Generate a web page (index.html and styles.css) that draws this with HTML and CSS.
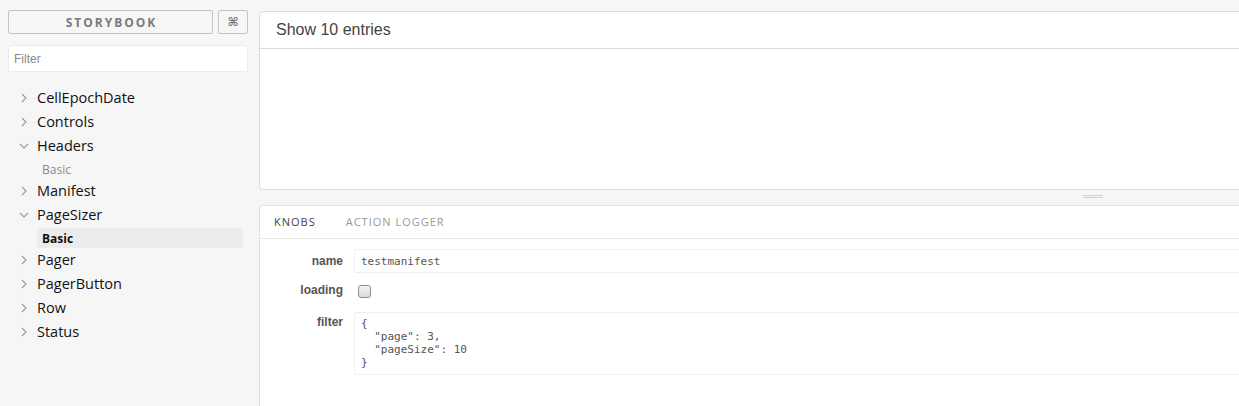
FILE: index.html
```html
<!DOCTYPE html>
<html lang="en">
<head>
<meta charset="utf-8">
<title>Storybook</title>
<link rel="stylesheet" href="styles.css">
</head>
<body>
<div class="app">
  <aside class="sidebar">
    <div class="header">
      <button class="brand">STORYBOOK</button>
      <button class="shortcut">⌘</button>
    </div>
    <input class="filter" type="text" placeholder="Filter">
    <ul class="tree">
      <li class="kind"><span class="row"><svg class="chev" width="10" height="10" viewBox="0 0 10 10"><path d="M3 1 L7 5 L3 9"/></svg>CellEpochDate</span></li>
      <li class="kind"><span class="row"><svg class="chev" width="10" height="10" viewBox="0 0 10 10"><path d="M3 1 L7 5 L3 9"/></svg>Controls</span></li>
      <li class="kind open"><span class="row"><svg class="chev" width="10" height="10" viewBox="0 0 10 10"><path d="M1 3 L5 7 L9 3"/></svg>Headers</span>
        <ul class="stories"><li class="story">Basic</li></ul>
      </li>
      <li class="kind"><span class="row"><svg class="chev" width="10" height="10" viewBox="0 0 10 10"><path d="M3 1 L7 5 L3 9"/></svg>Manifest</span></li>
      <li class="kind open"><span class="row"><svg class="chev" width="10" height="10" viewBox="0 0 10 10"><path d="M1 3 L5 7 L9 3"/></svg>PageSizer</span>
        <ul class="stories"><li class="story selected">Basic</li></ul>
      </li>
      <li class="kind"><span class="row"><svg class="chev" width="10" height="10" viewBox="0 0 10 10"><path d="M3 1 L7 5 L3 9"/></svg>Pager</span></li>
      <li class="kind"><span class="row"><svg class="chev" width="10" height="10" viewBox="0 0 10 10"><path d="M3 1 L7 5 L3 9"/></svg>PagerButton</span></li>
      <li class="kind"><span class="row"><svg class="chev" width="10" height="10" viewBox="0 0 10 10"><path d="M3 1 L7 5 L3 9"/></svg>Row</span></li>
      <li class="kind"><span class="row"><svg class="chev" width="10" height="10" viewBox="0 0 10 10"><path d="M3 1 L7 5 L3 9"/></svg>Status</span></li>
    </ul>
  </aside>
  <main class="main">
    <section class="preview">
      <div class="entries">Show 10 entries</div>
    </section>
    <div class="resizer"><span class="grip"></span></div>
    <section class="addons">
      <nav class="tabs">
        <span class="tab active">KNOBS</span>
        <span class="tab">ACTION LOGGER</span>
      </nav>
      <div class="knobs">
        <label class="label name-label">name</label>
        <div class="field"><input class="text-input" type="text" value="testmanifest"></div>
        <label class="label loading-label">loading</label>
        <div class="field check-field"><input class="check" type="checkbox"></div>
        <label class="label filter-label">filter</label>
        <div class="field"><textarea class="json" readonly>{
  "page": 3,
  "pageSize": 10
}</textarea></div>
      </div>
    </section>
  </main>
</div>
</body>
</html>
```
FILE: styles.css
```css
html, body {
  margin: 0;
  padding: 0;
}
body {
  background: #f6f6f6;
  overflow: hidden;
  height: 406px;
  font-family: "Liberation Sans", Arial, sans-serif;
}
.app {
  display: flex;
  height: 406px;
}
.sidebar {
  flex: none;
  width: 240px;
  padding: 10px 0 0 8px;
}
.header {
  display: flex;
  gap: 5px;
  height: 24px;
}
.brand, .shortcut {
  margin: 0;
  height: 24px;
  background: transparent;
  border: 1px solid #c4c4c4;
  border-radius: 2px;
  color: #7a7a7a;
  font-family: "Open Sans", sans-serif;
  font-weight: 700;
  padding: 0;
}
.brand {
  flex: 1;
  font-size: 12px;
  letter-spacing: 2px;
  padding-left: 2px;
}
.shortcut {
  width: 30px;
  font-size: 12px;
  font-family: "DejaVu Sans", sans-serif;
  font-weight: 700;
  color: #777;
}
.filter {
  display: block;
  box-sizing: border-box;
  margin: 11px 0 0;
  width: 240px;
  height: 27px;
  border: 1px solid #ebebeb;
  border-radius: 2px;
  background: #fff;
  padding: 0 5px;
  font-family: "Liberation Sans", Arial, sans-serif;
  font-size: 12px;
  outline: none;
}
.filter::placeholder {
  color: #8a8a8a;
}
.tree {
  list-style: none;
  margin: 13.5px 0 0;
  padding: 0;
  font-family: "Open Sans", sans-serif;
}
.row {
  display: flex;
  align-items: center;
  height: 24px;
  padding-left: 11px;
  font-size: 14.5px;
  color: #111;
}
.chev {
  flex: none;
  width: 10px;
  height: 10px;
  margin-right: 8px;
  fill: none;
  stroke: #9a9a9a;
  stroke-width: 1.1;
}
.stories {
  list-style: none;
  margin: 0;
  padding: 1px 0 0 29px;
}
.story {
  width: 201px;
  height: 20px;
  line-height: 21px;
  padding-left: 5px;
  font-size: 12px;
  color: #8c8c8c;
}
.story.selected {
  background: #ececec;
  color: #111;
  font-weight: 700;
}
.main {
  flex: none;
  width: 1668px;
  margin-left: 11px;
  padding-top: 11px;
  display: flex;
  flex-direction: column;
}
.preview {
  flex: none;
  box-sizing: border-box;
  height: 179px;
  background: #fff;
  border: 1px solid #dcdcdc;
  border-radius: 4px;
}
.entries {
  height: 36px;
  line-height: 36px;
  border-bottom: 1px solid #dcdcdc;
  padding-left: 16px;
  font-size: 16px;
  color: #444;
}
.resizer {
  flex: none;
  height: 15px;
  display: flex;
  justify-content: center;
  padding-top: 5px;
  box-sizing: border-box;
}
.grip {
  width: 20px;
  height: 1px;
  border-top: 1px solid #cfcfcf;
  border-bottom: 1px solid #cfcfcf;
}
.addons {
  flex: none;
  height: 240px;
  background: #fff;
  border: 1px solid #e2e2e2;
  border-radius: 4px;
}
.tabs {
  display: flex;
  align-items: center;
  border-bottom: 1px solid #e8e8e8;
  padding-left: 14px;
  padding-bottom: 1px;
  box-sizing: border-box;
  height: 33px;
  font-family: "Open Sans", sans-serif;
  font-size: 11px;
  letter-spacing: 1px;
}
.tab {
  margin-right: 30px;
  color: #9a9a9a;
}
.tab.active {
  color: #444;
}
.knobs {
  display: grid;
  grid-template-columns: 94px 1fr;
  padding-top: 10px;
}
.label {
  box-sizing: border-box;
  padding-right: 11px;
  text-align: right;
  font-weight: 700;
  font-size: 12px;
  color: #555;
}
.name-label {
  line-height: 24px;
}
.loading-label {
  margin-top: 8px;
  line-height: 18px;
}
.filter-label {
  margin-top: 13px;
  padding-top: 1px;
  line-height: 18px;
}
.field {
  min-width: 0;
}
.text-input {
  display: block;
  box-sizing: border-box;
  width: 100%;
  height: 24px;
  margin: 0;
  border: 1px solid #f0f0f0;
  border-radius: 2px;
  padding: 0 6px;
  font-family: "DejaVu Sans Mono", monospace;
  font-size: 11px;
  color: #555;
  outline: none;
}
.check-field {
  margin-top: 8px;
}
.check {
  display: block;
  appearance: none;
  -webkit-appearance: none;
  box-sizing: border-box;
  margin: 4px 0 0 4px;
  width: 13px;
  height: 13px;
  border: 1px solid #8e8e8e;
  border-radius: 3px;
  background: linear-gradient(#f4f4f4, #dcdcdc);
}
.json {
  display: block;
  box-sizing: border-box;
  width: 100%;
  height: 63px;
  margin: 13px 0 0;
  border: 1px solid #f0f0f0;
  border-radius: 2px;
  padding: 4px 6px;
  font-family: "DejaVu Sans Mono", monospace;
  font-size: 11px;
  line-height: 13px;
  color: #555;
  resize: none;
  outline: none;
  overflow: hidden;
}
```
